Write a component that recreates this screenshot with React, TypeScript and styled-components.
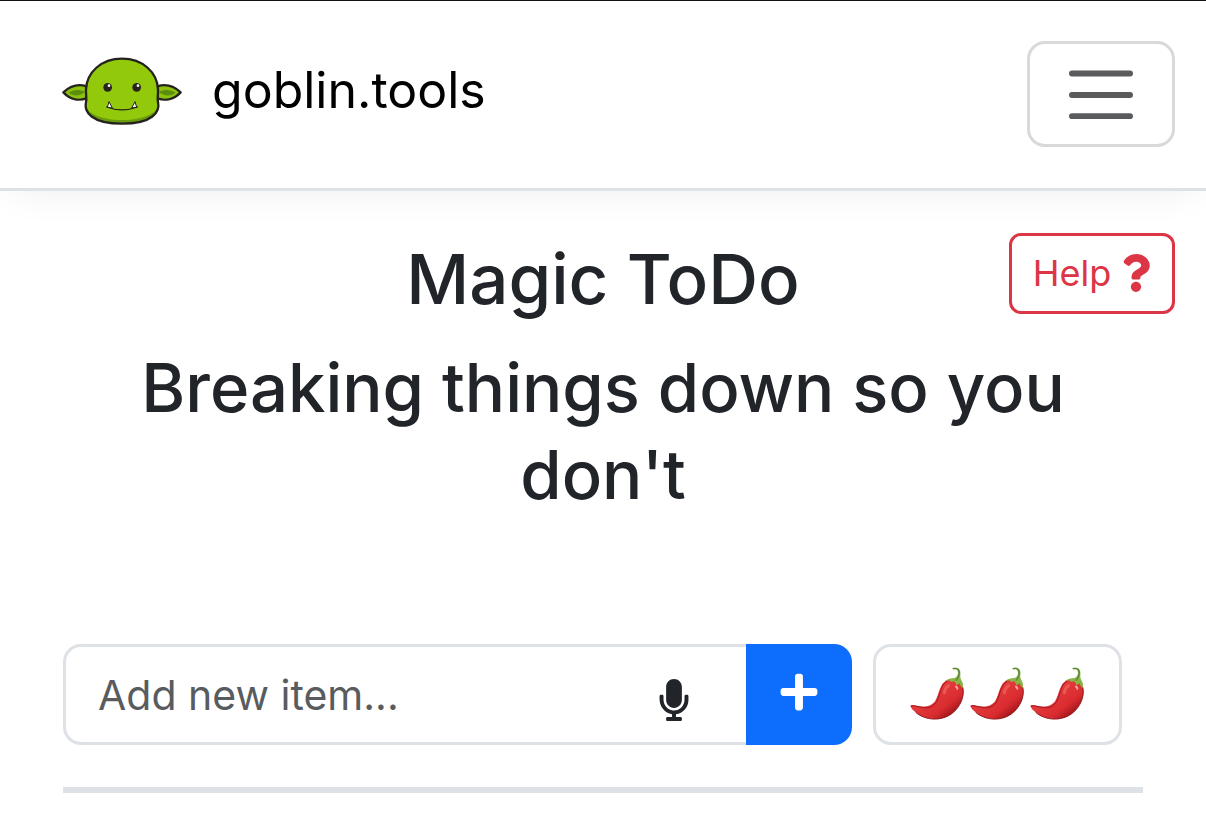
import React from 'react';
import styled, { createGlobalStyle } from 'styled-components';
import { FaMicrophone, FaPlus, FaQuestion } from 'react-icons/fa';

const GlobalStyle = createGlobalStyle`
  *, *::before, *::after { box-sizing: border-box; }
  body {
    margin: 0;
    background: #fff;
    color: #212529;
    font-family: Inter, "Liberation Sans", sans-serif;
  }
  button, input { font: inherit; margin: 0; }
`;

const Header = styled.header`
  display: flex;
  align-items: flex-start;
  justify-content: space-between;
  padding: 40px 31px 41px 62px;
  border-top: 1px solid #111;
  border-bottom: 3px solid #dee2e6;
  box-shadow: 0 12px 36px -12px rgba(0, 0, 0, 0.07);
`;

const Brand = styled.a`
  display: flex;
  align-items: center;
  gap: 30px;
  padding-top: 11px;
  color: #000;
  font-size: 50px;
  line-height: 76px;
  text-decoration: none;
`;

const Toggler = styled.button`
  display: flex;
  align-items: center;
  justify-content: center;
  width: 148px;
  height: 106px;
  padding: 0;
  border: 3px solid #d9d9d9;
  border-radius: 18px;
  background: transparent;
`;

const Main = styled.main`
  padding: 42px 31px 0;
`;

const Intro = styled.section`
  display: grid;
  grid-template-columns: 1fr auto 1fr;
  align-items: start;
`;

const Title = styled.h1`
  grid-column: 2;
  margin: 0;
  font-size: 69px;
  font-weight: 500;
  line-height: 92px;
`;

const Subtitle = styled.h2`
  margin: 19px 0 0;
  padding: 0 32px;
  font-size: 67px;
  font-weight: 500;
  line-height: 87px;
  text-align: center;
`;

const HelpButton = styled.button`
  display: flex;
  align-items: center;
  justify-content: center;
  justify-self: end;
  gap: 6px;
  width: 166px;
  height: 81px;
  padding: 0 0 2px 4px;
  border: 3px solid #dc3545;
  border-radius: 12px;
  background: transparent;
  color: #dc3545;
  font-size: 36px;
`;

const Form = styled.form`
  display: flex;
  gap: 21px;
  margin: 126px 32px 0;
  padding-right: 21px;
`;

const InputGroup = styled.div`
  display: flex;
  flex: 1;
  min-width: 0;
  height: 101px;
`;

const Field = styled.div`
  display: flex;
  flex: 1;
  align-items: center;
  min-width: 0;
  padding: 0 51px 0 32px;
  border: 3px solid #dee2e6;
  border-right: 0;
  border-radius: 18px 0 0 18px;
`;

const ItemInput = styled.input`
  flex: 1;
  min-width: 0;
  padding: 0;
  border: 0;
  outline: 0;
  background: transparent;
  color: #212529;
  font-size: 41px;
  line-height: 60px;

  &::placeholder { color: #595c5f; opacity: 1; }
`;

const MicButton = styled.button`
  display: flex;
  padding: 10px 0 0;
  border: 0;
  background: transparent;
  color: #212529;
`;

const AddButton = styled.button`
  display: flex;
  align-items: center;
  justify-content: center;
  width: 106px;
  padding: 0 0 6px;
  border: 0;
  border-radius: 0 18px 18px 0;
  background: #0d6efd;
  color: #fff;
`;

const SpiceButton = styled.button`
  display: flex;
  align-items: center;
  justify-content: center;
  gap: 6px;
  width: 249px;
  padding: 0 2px 2px 0;
  border: 3px solid #dee2e6;
  border-radius: 18px;
  background: #fff;
`;

const Divider = styled.hr`
  height: 6px;
  margin: 42px 32px 0;
  border: 0;
  background: #dee2e6;
`;

const headOutline =
  'M216 42C153 42 110 84 108 134C107 152 111 160 108 172C101 201 124 237 216 237C308 237 331 201 324 172C321 160 325 152 324 134C322 84 279 42 216 42Z';

const GoblinLogo = () => (
  <svg width="120" height="68" viewBox="36 34 360 204" overflow="visible" aria-hidden="true">
    <defs>
      <clipPath id="head">
        <path d={headOutline} />
      </clipPath>
    </defs>
    <g fill="#8cc10e" stroke="#25231f" strokeWidth="7" strokeLinejoin="round">
      <path d="M109 125C85 117 62 123 40 143C60 164 86 170 109 161Z" />
      <path d="M323 125C347 117 370 123 392 143C372 164 346 170 323 161Z" />
    </g>
    <path d="M56 144C70 134 88 134 105 141C90 155 71 156 56 144Z" fill="#5d8d0d" />
    <path d="M376 144C362 134 344 134 327 141C342 155 361 156 376 144Z" fill="#5d8d0d" />
    <g clipPath="url(#head)">
      <rect x="95" y="40" width="242" height="200" fill="#92c90a" />
      <path d="M95 178C120 213 165 226 216 226C267 226 312 213 337 178V242H95Z" fill="#6b9c0d" />
    </g>
    <path d={headOutline} fill="none" stroke="#25231f" strokeWidth="7" />
    <circle cx="173" cy="128" r="13" fill="#292421" />
    <circle cx="260" cy="128" r="13" fill="#292421" />
    <circle cx="177" cy="123" r="4" fill="#fff" />
    <circle cx="264" cy="123" r="4" fill="#fff" />
    <g fill="#fff" stroke="#25231f" strokeWidth="3" strokeLinejoin="round">
      <path d="M172 188L177 171L187 190Z" />
      <path d="M260 188L255 171L245 190Z" />
    </g>
    <path d="M170 187C199 198 233 198 262 187" fill="none" stroke="#25231f" strokeWidth="4" strokeLinecap="round" />
  </svg>
);

const MenuIcon = () => (
  <svg width="64" height="50" viewBox="0 0 64 50" fill="none" stroke="#595b5d" strokeWidth="6" strokeLinecap="round" aria-hidden="true">
    <path d="M3 4.500H61M3 26H61M3 47.200H61" />
  </svg>
);

const ChiliIcon = () => (
  <svg width="54" height="53" viewBox="119 111 162 159" aria-hidden="true">
    <defs>
      <linearGradient id="chiliSkin" gradientUnits="userSpaceOnUse" x1="200" y1="180" x2="255" y2="250">
        <stop offset="0" stopColor="#e23a3c" />
        <stop offset="0.6" stopColor="#da2c30" />
        <stop offset="1" stopColor="#9c1418" />
      </linearGradient>
    </defs>
    <path
      d="M121 229C122 223 130 225 139 227C163 232 184 229 195 212C207 193 207 162 229 151C247 142 269 149 277 171C284 196 271 231 244 251C212 275 164 271 136 247C128 241 121 234 121 229Z"
      fill="url(#chiliSkin)"
    />
    <path d="M122 228C130 225 139 230 153 232C176 237 191 230 200 213C209 195 210 166 229 154" fill="none" stroke="#a5181b" strokeWidth="3" strokeLinecap="round" />
    <path d="M136 247C164 271 212 275 244 251C271 231 284 196 277 171" fill="none" stroke="#8b1316" strokeWidth="3" />
    <path d="M222 188C224 177 229 170 235 167" fill="none" stroke="#ec5754" strokeWidth="9" strokeLinecap="round" />
    <path d="M257 170C260 172 261 174 261 176" fill="none" stroke="#f9a69c" strokeWidth="6" strokeLinecap="round" />
    <path
      d="M224 153C232 147 242 145 253 144C263 139 265 130 261 121C258 116 253 118 247 118C245 115 248 113 255 113C267 112 272 121 270 134C269 142 271 147 275 154C279 162 279 168 276 175C272 169 269 165 267 160L259 166L252 154L243 156L237 151Z"
      fill="#86b546"
    />
    <path d="M249 116C264 112 268 123 266 134C264 143 262 147 258 150" fill="none" stroke="#5c8538" strokeWidth="4" strokeLinecap="round" />
  </svg>
);

export default function App() {
  return (
    <>
      <GlobalStyle />
      <Header>
        <Brand href="#">
          <GoblinLogo />
          goblin.tools
        </Brand>
        <Toggler type="button" aria-label="Toggle navigation">
          <MenuIcon />
        </Toggler>
      </Header>
      <Main>
        <Intro>
          <Title>Magic ToDo</Title>
          <HelpButton type="button">
            Help
            <FaQuestion size={38} aria-hidden="true" />
          </HelpButton>
        </Intro>
        <Subtitle>Breaking things down so you don't</Subtitle>
        <Form onSubmit={(event) => event.preventDefault()}>
          <InputGroup>
            <Field>
              <ItemInput type="text" aria-label="Add new item" placeholder="Add new item..." />
              <MicButton type="button" aria-label="Dictate item">
                <FaMicrophone size={42} />
              </MicButton>
            </Field>
            <AddButton type="submit" aria-label="Add item">
              <FaPlus size={42} />
            </AddButton>
          </InputGroup>
          <SpiceButton type="button" aria-label="Spiciness level: three">
            <ChiliIcon />
            <ChiliIcon />
            <ChiliIcon />
          </SpiceButton>
        </Form>
        <Divider />
      </Main>
    </>
  );
}
